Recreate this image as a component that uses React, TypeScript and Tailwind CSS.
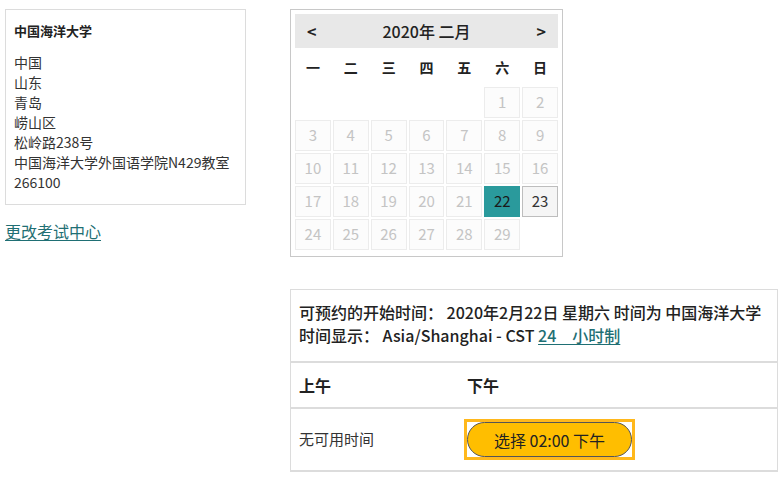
import React from 'react';

const font = { fontFamily: '"Noto Sans CJK SC", "Noto Sans", sans-serif' };

const address = ['中国', '山东', '青岛', '崂山区', '松岭路238号', '中国海洋大学外国语学院N429教室', '266100'];
const weekDays = ['一', '二', '三', '四', '五', '六', '日'];

// Feb 2020 starts on Saturday (col 6)
const cells: (number | null)[] = [null, null, null, null, null, ...Array.from({ length: 29 }, (_, i) => i + 1)];

function DayCell({ day }: { day: number | null }) {
    if (day === null) return <div className="h-[31px]" />;
    if (day === 22) {
        return (
            <div className="h-[31px] flex items-center justify-center bg-[#2a9a9c] text-[#1a1a1a] text-[15px]">
                {day}
            </div>
        );
    }
    if (day === 23) {
        return (
            <div className="h-[31px] flex items-center justify-center bg-[#f5f5f5] border border-[#bdbdbd] text-[#333] text-[15px]">
                {day}
            </div>
        );
    }
    return (
        <div className="h-[31px] flex items-center justify-center bg-[#fcfcfc] border border-[#ececec] text-[#c4c4c4] text-[15px]">
            {day}
        </div>
    );
}

export default function App() {
    return (
        <div className="w-[781px] h-[488px] bg-white text-[#333] relative overflow-hidden" style={font}>
            <div className="flex items-start pt-[9px]">
                {/* left column */}
                <div className="ml-[5px] w-[241px]">
                    <div className="border border-[#dcdcdc] px-[8px] pt-[11px] pb-[12px]">
                        <p className="text-[13px] font-bold leading-[20px] text-[#222]">中国海洋大学</p>
                        <div className="mt-[11px] text-[14px] leading-[20px] text-[#333]">
                            {address.map((l) => (
                                <p key={l}>{l}</p>
                            ))}
                        </div>
                    </div>
                    <a href="#" className="block mt-[16px] text-[16px] leading-[20px] text-[#1f6f74] underline underline-offset-2">
                        更改考试中心
                    </a>
                </div>

                {/* right column */}
                <div className="ml-[44px]">
                    <div className="w-[273px] border border-[#c8c8c8] p-[4px] pb-[6px]">
                        <div className="h-[34px] bg-[#e8e8e8] flex items-center justify-between px-[12px] text-[16px] font-medium text-[#222]">
                            <span className="font-bold">&lt;</span>
                            <span>2020年 二月</span>
                            <span className="font-bold">&gt;</span>
                        </div>
                        <div className="grid grid-cols-7 gap-x-[2px] h-[39px] items-center text-[14px] font-bold text-[#222]">
                            {weekDays.map((d) => (
                                <div key={d} className="text-center">{d}</div>
                            ))}
                        </div>
                        <div className="grid grid-cols-7 gap-[2px]">
                            {cells.map((d, i) => (
                                <DayCell key={i} day={d} />
                            ))}
                        </div>
                    </div>

                    <div className="mt-[32px] w-[488px] border border-[#dcdcdc] border-b-2">
                        <div className="px-[8px] pt-[11px] pb-[14px] text-[16px] leading-[23px] font-medium text-[#222] border-b-2 border-[#dcdcdc]">
                            <p>可预约的开始时间： 2020年2月22日 星期六 时间为 中国海洋大学</p>
                            <p>
                                时间显示： Asia/Shanghai - CST{' '}
                                <a href="#" className="text-[#1f6f74] underline underline-offset-2">24　小时制</a>
                            </p>
                        </div>
                        <div className="flex h-[46px] items-center text-[16px] font-bold text-[#222] border-b-2 border-[#dcdcdc]">
                            <div className="w-[168px] pl-[8px]">上午</div>
                            <div className="pl-[8px]">下午</div>
                        </div>
                        <div className="flex h-[61px] items-center">
                            <div className="w-[168px] pl-[8px] text-[15px] text-[#333]">无可用时间</div>
                            <div className="pl-[5px]">
                                <div className="inline-flex border-[3px] border-[#ffb81c] bg-white">
                                    <button className="w-[165px] h-[35px] rounded-full bg-[#ffbe00] border border-[#555] text-[16px] text-[#222]">
                                        选择 02:00 下午
                                    </button>
                                </div>
                            </div>
                        </div>
                    </div>
                </div>
            </div>
        </div>
    );
}
